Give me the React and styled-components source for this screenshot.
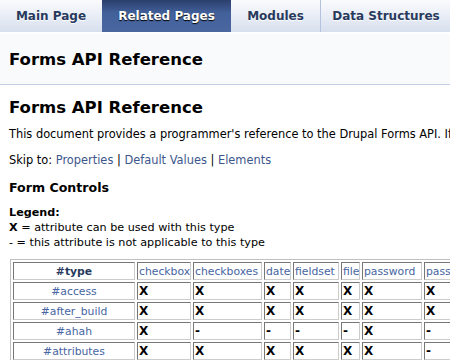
import React from "react";
import styled, { createGlobalStyle } from "styled-components";

const Global = createGlobalStyle`
  body {
    margin: 0;
    background: #fff;
    font-family: "DejaVu Sans", Verdana, sans-serif;
    color: #000;
    overflow: hidden;
  }
`;

const Tabs = styled.div`
  display: flex;
  height: 32px;
  background: linear-gradient(#fafbfd, #d7dfee);
  border-bottom: 1px solid #fff;
  white-space: nowrap;
`;

const Tab = styled.div`
  display: flex;
  align-items: center;
  justify-content: center;
  width: ${p => p.w}px;
  flex: none;
  font-size: 12px;
  font-weight: bold;
  color: ${p => (p.active ? "#fff" : "#283a5d")};
  text-shadow: ${p => (p.active ? "0 1px 1px #000" : "0 1px 1px #fff")};
  background: ${p => (p.active ? "linear-gradient(#2b3f6c, #42609a 40%, #4a67a0)" : "transparent")};
  border-right: ${p => (p.sep ? "1px solid #b4c2dd" : "none")};
`;

const Header = styled.div`
  background: #f9fafc;
  border-bottom: 1px solid #c4cfe5;
  height: 50px;
  display: flex;
  align-items: center;
  padding-left: 9px;
  margin-top: 1px;
`;

const Title = styled.div`
  font-size: 16.5px;
  font-weight: bold;
`;

const Content = styled.div`
  padding: 0 9px;
  white-space: nowrap;
`;

const H1 = styled.h1`
  font-size: 16.5px;
  font-weight: bold;
  margin: 13px 0 10px;
`;

const P = styled.p`
  font-size: 11.4px;
  margin: 0 0 12px;
`;

const A = styled.a`
  color: #3d578c;
  text-decoration: none;
`;

const H3 = styled.h3`
  font-size: 12.6px;
  font-weight: bold;
  margin: 13px 0 10px;
`;

const Legend = styled.div`
  font-size: 11.2px;
  line-height: 15px;
`;

const Table = styled.table`
  margin-top: 9px;
  margin-left: 1px;
  width: 516px;
  border: 1px solid #c0c0c0;
  border-spacing: 2px;
  table-layout: fixed;
  font-size: 10.8px;
`;

const Th = styled.td`
  border: 1px solid;
  border-color: #777 #ccc #ccc #777;
  height: 16px;
  padding: 0 1px;
  overflow: hidden;
  white-space: nowrap;
  color: ${p => (p.dark ? "#283a5d" : "#4665a2")};
  text-align: ${p => (p.center ? "center" : "left")};
  font-weight: ${p => (p.bold ? "bold" : "normal")};
`;

const Td = styled.td`
  border: 1px solid;
  border-color: #777 #ccc #ccc #777;
  height: 16px;
  padding: 0 1px;
  font-weight: bold;
  font-size: 12px;
  color: #000;
`;

const cols = [
  ["checkbox", 54],
  ["checkboxes", 69],
  ["date", 27],
  ["fieldset", 46],
  ["file", 19],
  ["password", 60],
  ["password_confirm", 100],
];

const rows = [
  ["#access", "xxxxxxx"],
  ["#after_build", "xxxxxxx"],
  ["#ahah", "x----x-"],
  ["#attributes", "xxxxxx-"],
];

export default function App() {
  return (
    <>
      <Global />
      <Tabs>
        <Tab w={102}>Main Page</Tab>
        <Tab w={129} active>Related Pages</Tab>
        <Tab w={89} sep>Modules</Tab>
        <Tab w={130}>Data Structures</Tab>
      </Tabs>
      <Header>
        <Title>Forms API Reference</Title>
      </Header>
      <Content>
        <H1>Forms API Reference</H1>
        <P>This document provides a programmer's reference to the Drupal Forms API. If you are looking for a guide</P>
        <P>
          Skip to: <A>Properties</A> | <A>Default Values</A> | <A>Elements</A>
        </P>
        <H3>Form Controls</H3>
        <Legend>
          <b>Legend:</b>
          <br />
          <b>X</b> = attribute can be used with this type
          <br />- = this attribute is not applicable to this type
        </Legend>
        <Table>
          <colgroup>
            <col style={{ width: 122 }} />
            {cols.map(([n, w]) => (
              <col key={n} style={{ width: w }} />
            ))}
          </colgroup>
          <tbody>
            <tr>
              <Th center bold dark>#type</Th>
              {cols.map(([n]) => (
                <Th key={n}>{n}</Th>
              ))}
            </tr>
            {rows.map(([name, vals]) => (
              <tr key={name}>
                <Th center>{name}</Th>
                {vals.split("").map((v, i) => (
                  <Td key={i}>{v === "x" ? "X" : "-"}</Td>
                ))}
              </tr>
            ))}
          </tbody>
        </Table>
      </Content>
    </>
  );
}
